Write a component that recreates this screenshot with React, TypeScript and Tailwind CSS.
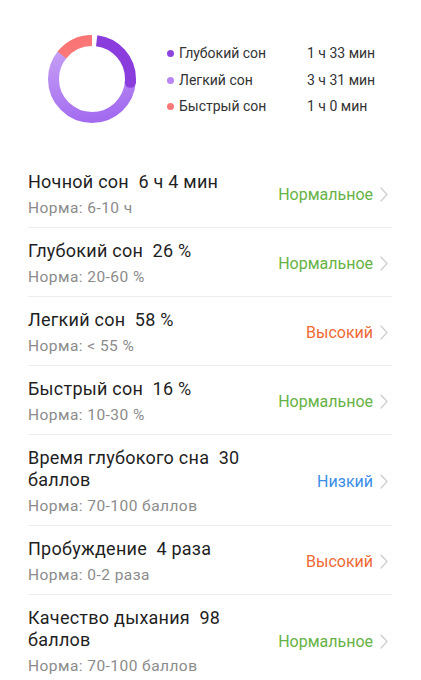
import React from "react";

type Row = {
  title: string;
  value: string;
  norm: string;
  status: string;
  tone: "green" | "orange" | "blue";
};

const rows: Row[] = [
  { title: "Ночной сон", value: "6 ч 4 мин", norm: "Норма: 6-10 ч", status: "Нормальное", tone: "green" },
  { title: "Глубокий сон", value: "26 %", norm: "Норма: 20-60 %", status: "Нормальное", tone: "green" },
  { title: "Легкий сон", value: "58 %", norm: "Норма: < 55 %", status: "Высокий", tone: "orange" },
  { title: "Быстрый сон", value: "16 %", norm: "Норма: 10-30 %", status: "Нормальное", tone: "green" },
  { title: "Время глубокого сна", value: "30 баллов", norm: "Норма: 70-100 баллов", status: "Низкий", tone: "blue" },
  { title: "Пробуждение", value: "4 раза", norm: "Норма: 0-2 раза", status: "Высокий", tone: "orange" },
  { title: "Качество дыхания", value: "98 баллов", norm: "Норма: 70-100 баллов", status: "Нормальное", tone: "green" },
];

const toneClass = {
  green: "text-[#66b245]",
  orange: "text-[#ee6a35]",
  blue: "text-[#3a8ee6]",
};

const legend = [
  { label: "Глубокий сон", value: "1 ч 33 мин", dot: "bg-[#8e44dd]" },
  { label: "Легкий сон", value: "3 ч 31 мин", dot: "bg-[#b985f2]" },
  { label: "Быстрый сон", value: "1 ч 0 мин", dot: "bg-[#f87878]" },
];

const Donut = () => {
  const r = 38.5;
  const c = 2 * Math.PI * r;
  const seg = (from: number, to: number) => ({
    strokeDasharray: `${((to - from) / 360) * c} ${c}`,
    strokeDashoffset: `${-(from / 360) * c}`,
  });
  // round end of the deep-sleep arc
  const end = (95 * Math.PI) / 180;
  const capX = 45 + r * Math.sin(end);
  const capY = 45 - r * Math.cos(end);
  return (
    <svg width="90" height="90" viewBox="0 0 90 90">
      <defs>
        <linearGradient id="deep" x1="0.4" y1="0" x2="0.9" y2="0.6">
          <stop offset="0" stopColor="#b38af2" />
          <stop offset="1" stopColor="#8a3ddc" />
        </linearGradient>
        <linearGradient id="light" x1="1" y1="0.4" x2="0" y2="0.6">
          <stop offset="0" stopColor="#c7a1f6" />
          <stop offset="1" stopColor="#a36cef" />
        </linearGradient>
        <linearGradient id="rem" x1="0" y1="0.5" x2="1" y2="0">
          <stop offset="0" stopColor="#f69595" />
          <stop offset="1" stopColor="#fb7070" />
        </linearGradient>
      </defs>
      <g transform="rotate(-90 45 45)" fill="none" strokeWidth="11">
        <circle cx="45" cy="45" r={r} stroke="url(#light)" style={seg(94, 309)} />
        <circle cx="45" cy="45" r={r} stroke="url(#rem)" style={seg(308, 368)} />
        <circle cx="45" cy="45" r={r} stroke="url(#deep)" style={seg(7, 95)} />
      </g>
      <circle cx={capX} cy={capY} r="5.5" fill="#8a3ddc" />
    </svg>
  );
};

const Chevron = () => (
  <svg width="8" height="15" viewBox="0 0 8 15" className="ml-[7px] mr-[4px]">
    <path d="M1 1l6 6.5-6 6.5" fill="none" stroke="#cfcfcf" strokeWidth="1.3" strokeLinecap="round" strokeLinejoin="round" />
  </svg>
);

export default function App() {
  return (
    <div className="w-[421px] h-[680px] overflow-hidden bg-white font-['Roboto',sans-serif]">
      <section className="flex items-center h-[159px] pl-[47px] pb-[2px]">
        <Donut />
        <div className="ml-[30px] flex flex-col gap-[8px] pt-[3px]">
          {legend.map((l) => (
            <div key={l.label} className="flex items-center h-[18.5px] text-[14px] text-[#333]">
              <span className={`w-[7px] h-[7px] rounded-full ${l.dot}`} />
              <span className="ml-[5px] w-[128px]">{l.label}</span>
              <span>{l.value}</span>
            </div>
          ))}
        </div>
      </section>
      <ul className="pl-[28px] pr-[29px]">
        {rows.map((row) => (
          <li
            key={row.title}
            className="flex items-center justify-between border-b border-[#ededed] pt-[12px] pb-[9px]"
          >
            <div className="flex flex-col">
              <div className="w-[226px] text-[18px] leading-[22px] tracking-[0.25px] text-[#1f1f1f]">
                {row.title}
                {"\u00a0 "}
                {row.value}
              </div>
              <div className="mt-[5px] text-[15.5px] leading-[20px] tracking-[0.45px] text-[#8b8b8b]">
                {row.norm}
              </div>
            </div>
            <div className="flex items-center">
              <span className={`text-[16px] ${toneClass[row.tone]}`}>{row.status}</span>
              <Chevron />
            </div>
          </li>
        ))}
      </ul>
    </div>
  );
}
